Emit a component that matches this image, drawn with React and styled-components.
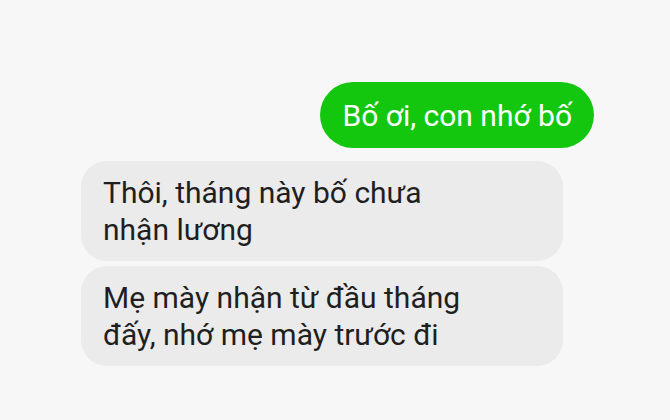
import React from "react";
import styled, { createGlobalStyle } from "styled-components";

const Global = createGlobalStyle`
  html, body {
    margin: 0;
    padding: 0;
    background: #f7f7f7;
  }
  body {
    font-family: Roboto, "Noto Sans", "Liberation Sans", sans-serif;
  }
`;

const Thread = styled.div`
  width: 670px;
  height: 420px;
  box-sizing: border-box;
  padding: 82px 76px 0 81px;
  display: flex;
  flex-direction: column;
  background: #f7f7f7;
`;

const Bubble = styled.div`
  box-sizing: border-box;
  font-size: 30px;
  line-height: 37px;
  ${(p) =>
    p.$mine
      ? `
    align-self: flex-end;
    height: 66px;
    padding: 15px 22px 0 23px;
    border-radius: 33px;
    background: #13c70f;
    color: #ffffff;
    margin-bottom: 13px;
  `
      : `
    align-self: flex-start;
    width: 482px;
    min-height: 100px;
    padding: 13px 22px 0 22px;
    border-radius: 26px;
    background: #ebebeb;
    color: #1f1f1f;
    margin-bottom: 5px;
  `}
`;

const App = () => {
  return (
    <>
      <Global />
      <Thread>
        <Bubble $mine>Bố ơi, con nhớ bố</Bubble>
        <Bubble>
          Thôi, tháng này bố chưa
          <br />
          nhận lương
        </Bubble>
        <Bubble>
          Mẹ mày nhận từ đầu tháng
          <br />
          đấy, nhớ mẹ mày trước đi
        </Bubble>
      </Thread>
    </>
  );
};

export default App;
